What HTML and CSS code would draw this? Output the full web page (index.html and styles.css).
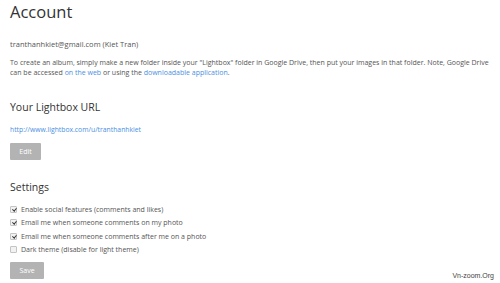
FILE: index.html
```html
<!DOCTYPE html>
<html lang="en">
<head>
    <meta charset="UTF-8">
    <title>Account</title>
    <link rel="stylesheet" href="styles.css">
</head>
<body>
<div class="page">
    <h1 class="title">Account</h1>
    <p class="email">tranthanhkiet@gmail.com (Kiet Tran)</p>
    <p class="intro">To create an album, simply make a new folder inside your "Lightbox" folder in Google Drive, then put your images in that folder. Note, Google Drive can be accessed <a href="#">on the web</a> or using the <a href="#">downloadable application</a>.</p>

    <h2 class="section">Your Lightbox URL</h2>
    <p class="url"><a href="#">http://www.lightbox.com/u/tranthanhkiet</a></p>
    <button class="btn">Edit</button>

    <h2 class="section settings">Settings</h2>
    <ul class="options">
        <li><span class="check on"></span>Enable social features (comments and likes)</li>
        <li><span class="check on"></span>Email me when someone comments on my photo</li>
        <li><span class="check on"></span>Email me when someone comments after me on a photo</li>
        <li><span class="check"></span>Dark theme (disable for light theme)</li>
    </ul>
    <button class="btn save">Save</button>
</div>
<div class="mark">Vn-zoom.Org</div>
</body>
</html>
```

FILE: styles.css
```css
body{
    margin: 0;
    background: #fff;
    font-family: "Open Sans", "Liberation Sans", sans-serif;
    color: #555;
    overflow: hidden;
}
.page{
    padding-left: 10px;
    width: 486px;
}
a{
    color: #4a90e2;
    text-decoration: none;
}
.title{
    margin: 0;
    font-size: 16.5px;
    line-height: 24px;
    font-weight: 400;
    color: #333;
}
.email{
    margin: 15px 0 0;
    font-size: 7.5px;
    line-height: 10px;
}
.intro{
    margin: 9px 0 0;
    font-size: 7px;
    line-height: 10px;
}
.section{
    margin: 21px 0 0;
    font-size: 10.5px;
    line-height: 16px;
    font-weight: 400;
    color: #333;
}
.url{
    margin: 10px 0 0;
    font-size: 6.8px;
    line-height: 10px;
}
.btn{
    display: block;
    margin-top: 8px;
    width: 31px;
    height: 17px;
    padding: 0;
    border: 0;
    border-radius: 1px;
    background: #b3b3b3;
    color: #fff;
    font-family: inherit;
    font-size: 7px;
}
.settings{
    margin-top: 19px;
}
.options{
    list-style: none;
    margin: 8px 0 0;
    padding: 0;
}
.options li{
    display: flex;
    align-items: center;
    height: 13.3px;
    font-size: 7px;
}
.check{
    width: 5px;
    height: 5px;
    margin-right: 4px;
    border: 1px solid #c4c4c4;
    border-radius: 1px;
    background: #f2f2f2;
    position: relative;
}
.check.on::after{
    content: "";
    position: absolute;
    left: 1.5px;
    top: 0;
    width: 1.5px;
    height: 3px;
    border: solid #333;
    border-width: 0 1.2px 1.2px 0;
    transform: rotate(40deg);
}
.save{
    margin-top: 6px;
    width: 34px;
}
.mark{
    position: absolute;
    right: 6px;
    bottom: 4px;
    font-family: "Liberation Sans", sans-serif;
    font-size: 7px;
    color: #444;
}
```
